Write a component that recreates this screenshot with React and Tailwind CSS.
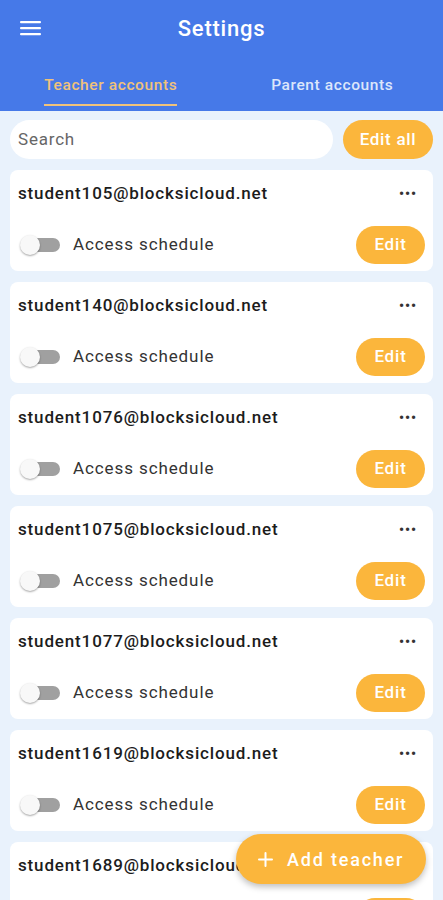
import React from 'react';

const emails = [
  'student105@blocksicloud.net',
  'student140@blocksicloud.net',
  'student1076@blocksicloud.net',
  'student1075@blocksicloud.net',
  'student1077@blocksicloud.net',
  'student1619@blocksicloud.net',
  'student1689@blocksicloud.net',
];

const AccountCard = ({ email }) => (
  <div className="bg-white rounded-lg h-[101px] px-2 pt-[13px] shrink-0">
    <div className="flex items-center justify-between h-[22px]">
      <span className="text-[17px] font-medium text-[#1c1c1c] tracking-[0.85px] whitespace-nowrap">{email}</span>
      <span className="mr-[8px] text-[#333] text-[14px] font-bold tracking-[1px] leading-none">•••</span>
    </div>
    <div className="flex items-center justify-between mt-[21px]">
      <div className="flex items-center">
        <div className="relative w-[40px] h-[20px] ml-[2px] flex items-center">
          <div className="w-[36px] h-[14px] rounded-full bg-[#a0a0a0] ml-[4px]" />
          <div className="absolute left-0 top-0 w-[20px] h-[20px] rounded-full bg-[#f8f8f8] shadow-[0_1px_2px_rgba(0,0,0,0.35)]" />
        </div>
        <span className="ml-[13px] text-[17px] text-[#333] tracking-[0.9px]">Access schedule</span>
      </div>
      <button className="w-[69px] h-[38px] rounded-full bg-[#fbb63c] text-white text-[17px] font-medium tracking-[0.8px]">Edit</button>
    </div>
  </div>
);

const App = () => {
  return (
    <div className="w-[443px] h-[900px] overflow-hidden bg-[#e9f2fc] flex flex-col relative" style={{ fontFamily: 'Roboto, "Liberation Sans", sans-serif' }}>
      <div className="bg-[#4679e8] h-[111px] shrink-0 flex flex-col">
        <div className="relative h-[57px] flex items-center justify-center">
          <svg className="absolute left-[20px] top-[20px]" width="21" height="16" viewBox="0 0 21 16">
            <rect x="0" y="1" width="21" height="2.2" rx="1" fill="white" />
            <rect x="0" y="7" width="21" height="2.2" rx="1" fill="white" />
            <rect x="0" y="13" width="21" height="2.2" rx="1" fill="white" />
          </svg>
          <span className="text-white text-[22px] font-medium tracking-[0.75px]">Settings</span>
        </div>
        <div className="flex h-[54px]">
          <div className="flex-1 flex justify-center">
            <div className="flex flex-col items-center">
              <span className="text-[#f0c27a] text-[15.5px] font-medium mt-[17px] tracking-[0.6px]">Teacher accounts</span>
              <div className="w-[133px] h-[2px] bg-[#f0c27a] mt-[7px]" />
            </div>
          </div>
          <div className="flex-1 flex justify-center">
            <span className="text-[#dce6fb] text-[15.5px] font-medium mt-[17px] tracking-[0.6px]">Parent accounts</span>
          </div>
        </div>
      </div>
      <div className="flex flex-col gap-[11px] px-[10px] pt-[9px]">
        <div className="flex items-center gap-[10px] h-[39px]">
          <div className="flex-1 h-[39px] bg-white rounded-full flex items-center px-[8px]">
            <span className="text-[17px] text-[#666] tracking-[0.8px]">Search</span>
          </div>
          <button className="w-[90px] h-[39px] rounded-full bg-[#fbb63c] text-white text-[17px] font-medium tracking-[0.7px]">Edit all</button>
        </div>
        {emails.map((email) => (
          <AccountCard key={email} email={email} />
        ))}
      </div>
      <button className="absolute left-[236px] top-[834px] w-[190px] h-[50px] rounded-full bg-[#fbb63c] text-white flex items-center pl-[22px] gap-[14px] shadow-[0_3px_6px_rgba(0,0,0,0.25)]">
        <svg width="15" height="15" viewBox="0 0 15 15">
          <path d="M7.5 1v13M1 7.5h13" stroke="white" strokeWidth="2" strokeLinecap="round" />
        </svg>
        <span className="text-[18px] font-medium tracking-[1.8px] whitespace-nowrap">Add teacher</span>
      </button>
    </div>
  );
};

export default App;
